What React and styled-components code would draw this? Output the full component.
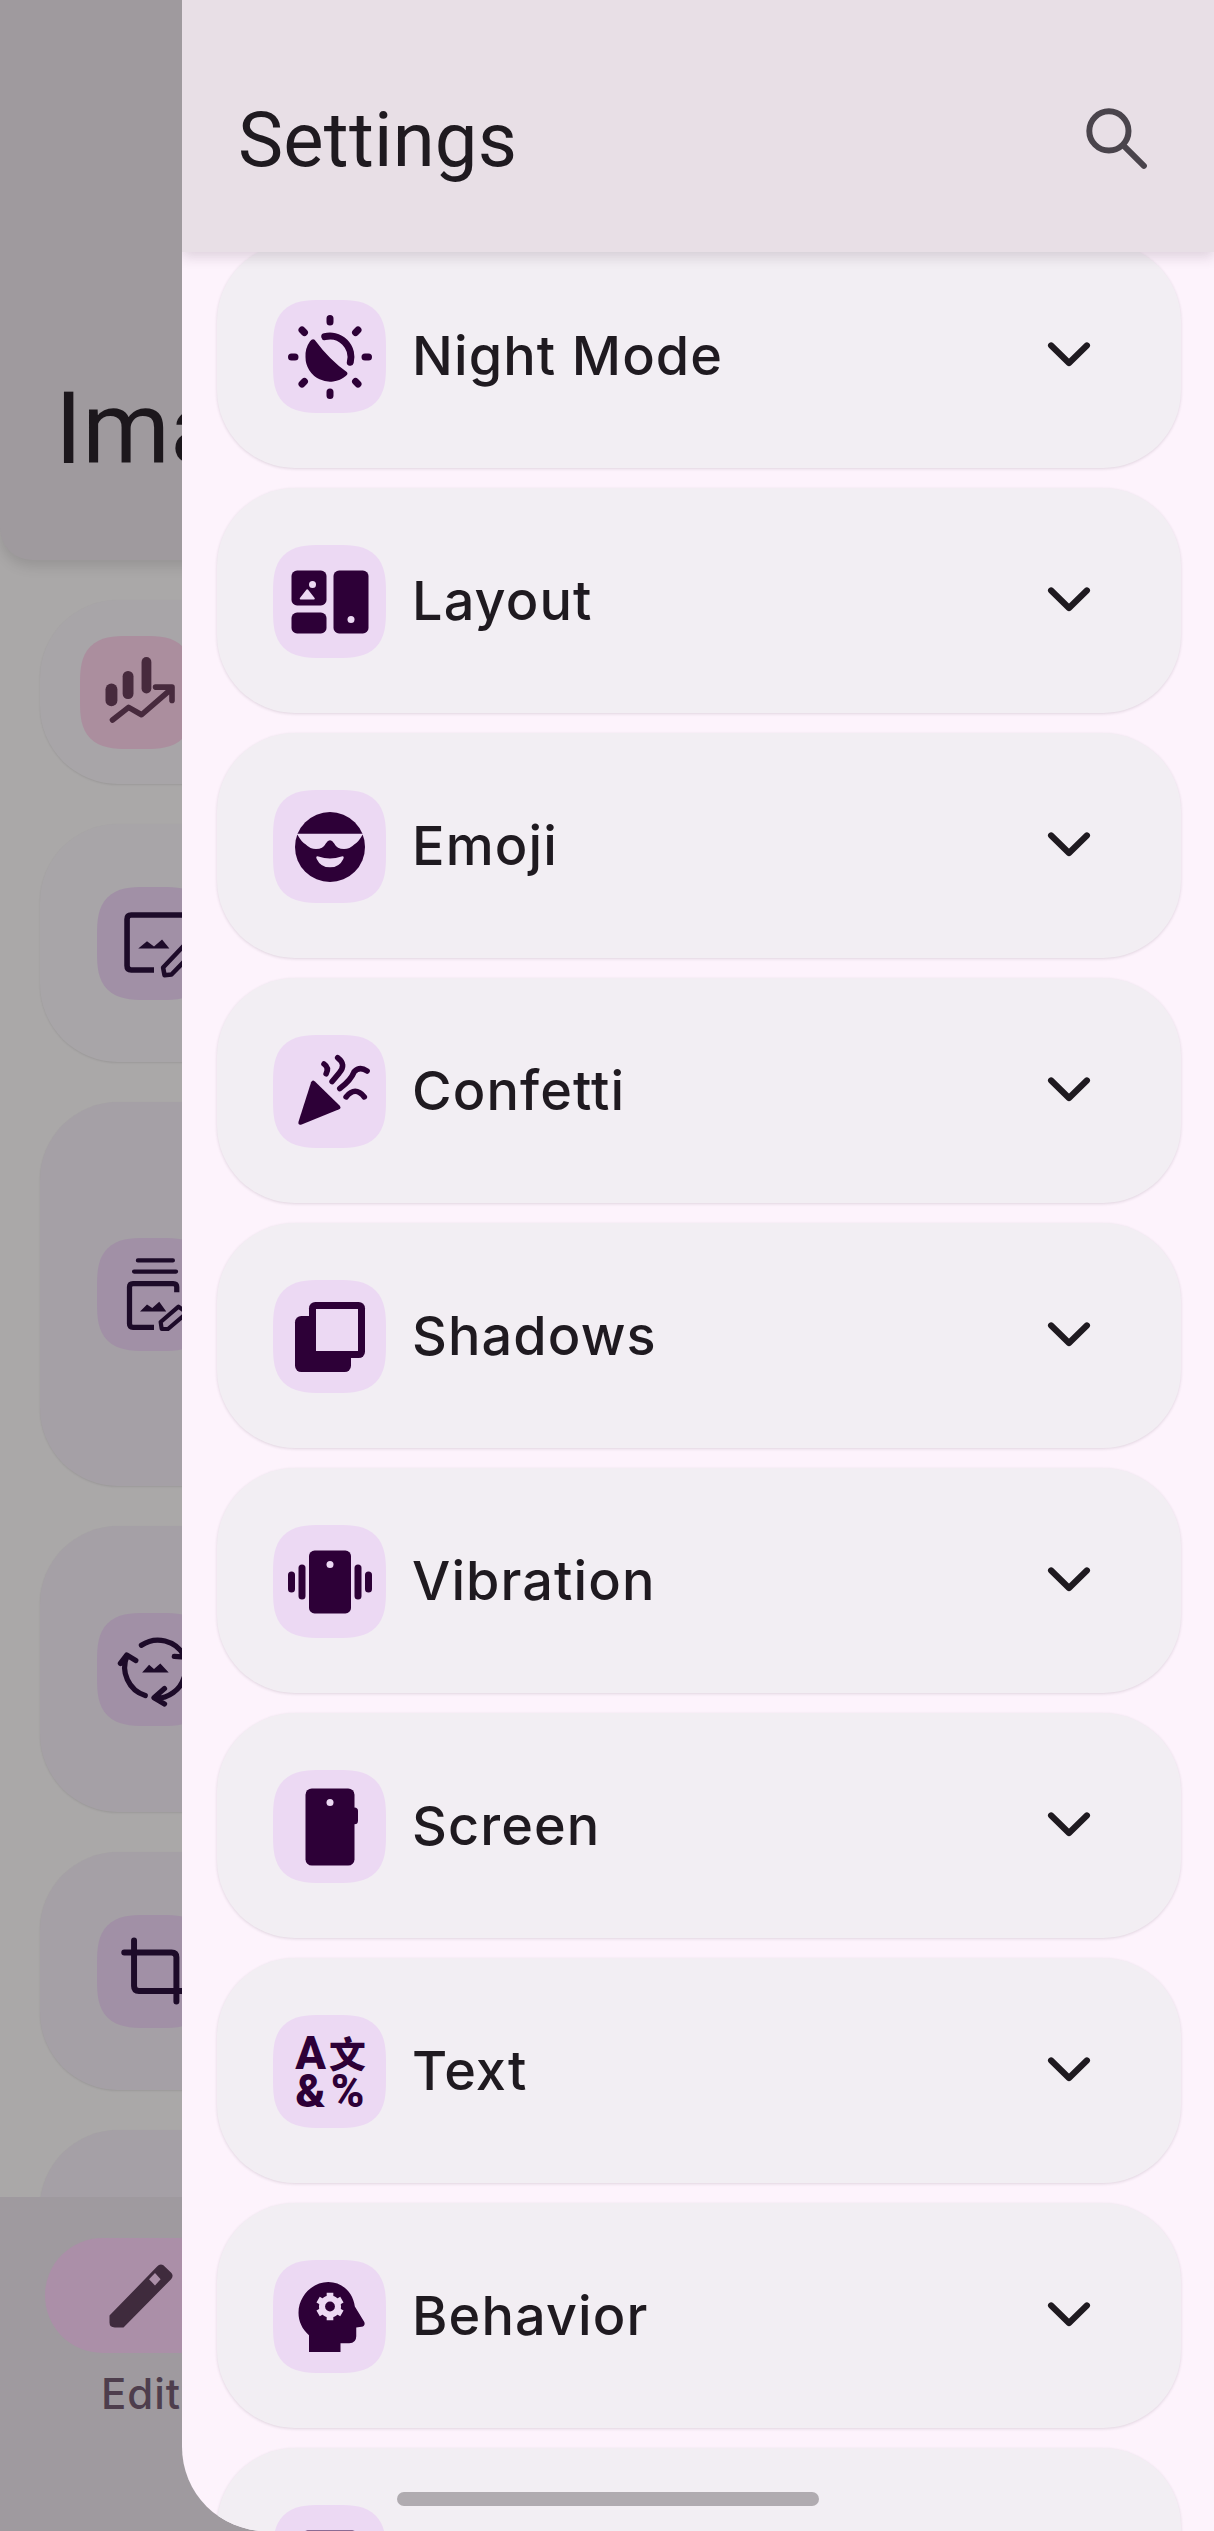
import React from "react";
import styled, { createGlobalStyle } from "styled-components";

const GlobalStyle = createGlobalStyle`
  html, body {
    margin: 0;
    padding: 0;
    background: #aaa8a8;
    font-family: "Roboto", "Liberation Sans", sans-serif;
  }
  * {
    box-sizing: border-box;
  }
`;

const Screen = styled.div`
  position: relative;
  width: 1214px;
  height: 2531px;
  overflow: hidden;
`;

const Page = styled.div`
  height: 100%;
  display: flex;
  flex-direction: column;
  background: #aaa8a8;
`;

const PageHeader = styled.header`
  height: 560px;
  flex: none;
  padding: 371px 0 0 55px;
  background: #9f9a9e;
  border-radius: 0 0 32px 32px;
  box-shadow: 0 6px 14px rgba(0, 0, 0, 0.12);
`;

const PageTitle = styled.h1`
  margin: 0;
  font-size: 100px;
  line-height: 116px;
  font-weight: 380;
  color: #1c171c;
  white-space: nowrap;
`;

const ToolList = styled.div`
  flex: 1;
  min-height: 0;
  overflow: hidden;
  display: flex;
  flex-direction: column;
  gap: 40px;
  padding: 40px 40px 0;
`;

const ToolCard = styled.div`
  flex: none;
  height: ${(props) => props.$height}px;
  display: flex;
  align-items: center;
  padding-left: ${(props) => (props.$accent ? 40 : 57)}px;
  background: ${(props) => (props.$tone === "deep" ? "#a5a0a6" : "#a8a5a8")};
  border-radius: 78px;
  box-shadow: 0 1px 2px rgba(0, 0, 0, 0.09);
`;

const ToolIcon = styled.div`
  width: 113px;
  height: 113px;
  flex: none;
  display: flex;
  align-items: center;
  justify-content: center;
  border-radius: 48px;
  corner-shape: superellipse(1.5);
  background: ${(props) => (props.$accent ? "#ab8e9e" : "#a190a6")};
  color: ${(props) => (props.$accent ? "#472a3d" : "#1d0b29")};
`;

const BottomNav = styled.nav`
  height: 334px;
  flex: none;
  padding: 41px 0 0 45px;
  background: #9f9a9f;
`;

const NavItem = styled.div`
  width: 192px;
  display: flex;
  flex-direction: column;
  align-items: center;
  gap: 16px;
`;

const NavPill = styled.div`
  width: 192px;
  height: 115px;
  display: flex;
  align-items: center;
  justify-content: center;
  border-radius: 58px;
  background: #ab8fa8;
  color: #3f2b3d;
`;

const NavLabel = styled.span`
  font-family: "Inter", "Roboto", sans-serif;
  font-size: 42px;
  line-height: 50px;
  font-weight: 500;
  letter-spacing: 1px;
  color: #4e3e4d;
`;

const Drawer = styled.aside`
  position: absolute;
  top: 0;
  left: 182px;
  bottom: 0;
  width: 1032px;
  overflow: hidden;
  background: #fdf3fc;
  border-radius: 0 0 0 84px;
`;

const DrawerBar = styled.header`
  position: relative;
  z-index: 2;
  height: 252px;
  display: flex;
  align-items: center;
  justify-content: space-between;
  padding: 27px 54px 0 56px;
  background: #e8dfe6;
  box-shadow: 0 5px 12px rgba(60, 40, 60, 0.16);
`;

const DrawerTitle = styled.h2`
  margin: 0;
  font-size: 76px;
  line-height: 88px;
  font-weight: 390;
  letter-spacing: 0.2px;
  color: #1f1a20;
`;

const SearchButton = styled.div`
  display: flex;
  color: #4a444c;
`;

const SettingsList = styled.div`
  display: flex;
  flex-direction: column;
  gap: 20px;
  margin-top: -9px;
  padding: 0 33px 0 35px;
`;

const SettingCard = styled.div`
  height: 225px;
  flex: none;
  display: flex;
  align-items: center;
  padding: 0 70px 0 56px;
  background: #f2eef3;
  border-radius: 78px;
  box-shadow: 0 1px 3px rgba(50, 30, 50, 0.14);
`;

const SettingIcon = styled.div`
  width: 113px;
  height: 113px;
  flex: none;
  margin-top: 2px;
  display: flex;
  align-items: center;
  justify-content: center;
  border-radius: 48px;
  corner-shape: superellipse(1.5);
  background: #ecd9f3;
  color: #2d0037;
`;

const SettingLabel = styled.span`
  flex: 1;
  margin-left: 26px;
  font-family: "Inter", "Roboto", sans-serif;
  font-size: 54px;
  line-height: 64px;
  font-weight: 500;
  letter-spacing: 1.1px;
  color: #1f1a20;
`;

const Chevron = styled.div`
  display: flex;
  color: #1f1a20;
`;

const HomeBar = styled.div`
  position: absolute;
  left: 397px;
  bottom: 25px;
  width: 422px;
  height: 14px;
  border-radius: 7px;
  background: #b0abb0;
  z-index: 3;
`;

const Glyph = ({ children }) => (
  <svg width="84" height="84" viewBox="0 0 24 24" fill="currentColor">
    {children}
  </svg>
);

const BOX = "#ecd9f3";

const NightModeIcon = () => (
  <Glyph>
    <g stroke="currentColor" strokeWidth="2" strokeLinecap="round">
      <path d="M12 1v1M12 22v1M1 12h1M22 12h1M4 4.3l.7.7M19.3 19l.7.7M4 19.7l.7-.7M19.3 5l.7-.7" />
      <path d="M10.5 6.2A6 6 0 0 1 17.8 13.5" fill="none" />
    </g>
    <path d="M7.6 7.1Q12 13 16.8 16.3Q17.3 16.9 16.5 17.4A7 7 0 0 1 5 12A7 7 0 0 1 6.3 7.5Q7 6.6 7.6 7.1Z" />
  </Glyph>
);

const LayoutIcon = () => (
  <Glyph>
    <rect x="1" y="3" width="10" height="10" rx="1.6" />
    <rect x="1" y="15" width="10" height="6" rx="1.6" />
    <rect x="13" y="3" width="10" height="18" rx="1.6" />
    <circle cx="7" cy="7" r="1" fill={BOX} />
    <path d="M5.5 8.6 7.4 11H3.6Z" fill={BOX} stroke={BOX} strokeWidth=".5" strokeLinejoin="round" />
    <circle cx="18" cy="17" r="1" fill={BOX} />
  </Glyph>
);

const EmojiIcon = () => (
  <Glyph>
    <circle cx="12" cy="12" r="10" />
    <path
      d="M0 8.2H24L21.3 8.5Q20 10.8 19 11.2Q17.6 12.6 16 12.6Q14 12.6 13.2 11Q12.6 10.1 12 10.1Q11.4 10.1 10.8 11Q10 12.6 8 12.6Q6.4 12.6 5 11.2Q4 10.8 2.7 8.5Z"
      fill={BOX}
    />
    <path
      d="M8.7 14.7Q12 15.8 15.3 14.7Q16.2 14.5 15.8 15.4A4.2 4.2 0 0 1 8.2 15.4Q7.8 14.5 8.7 14.7Z"
      fill={BOX}
    />
  </Glyph>
);

const ConfettiIcon = () => (
  <Glyph>
    <path d="M7.7 9 14.8 15.9Q15.3 16.6 14.6 16.9L3.9 21.3Q2.8 21.6 3 20.5L6.6 9.2Q7 8.4 7.7 9Z" />
    <g fill="none" stroke="currentColor" strokeWidth="1.6" strokeLinecap="round">
      <path d="M10.3 4Q11.8 5 10.9 6.8" />
      <path d="M14.2 2.2Q16.8 4.2 14.6 6.6L12.6 9" />
      <path d="M22.6 6Q20.5 4.6 18.9 6.2Q18 8.6 14.8 11" />
      <path d="M16.6 13.4Q19.2 10.2 21.8 13.4" />
    </g>
  </Glyph>
);

const ShadowsIcon = () => (
  <Glyph>
    <rect x="2" y="6" width="16" height="16" rx="1.8" />
    <rect x="6" y="2" width="16" height="16" rx="1.8" />
    <rect x="8" y="4" width="12" height="12" fill={BOX} />
  </Glyph>
);

const VibrationIcon = () => (
  <Glyph>
    <rect x="6" y="3" width="12" height="18" rx="1.6" />
    <rect x="3" y="7" width="2" height="10" rx="1" />
    <rect x="0" y="9" width="2" height="6" rx="1" />
    <rect x="19" y="7" width="2" height="10" rx="1" />
    <rect x="22" y="9" width="2" height="6" rx="1" />
    <circle cx="12" cy="7" r="1" fill={BOX} />
  </Glyph>
);

const ScreenIcon = () => (
  <Glyph>
    <rect x="5" y="1" width="14" height="22" rx="1.8" />
    <rect x="18" y="6.4" width="2" height="4.8" rx="1" />
    <circle cx="12" cy="5" r="1" fill={BOX} />
  </Glyph>
);

const TextIcon = () => (
  <svg width="84" height="84" viewBox="0 0 24 24" fill="currentColor" overflow="visible" fontFamily="Roboto, sans-serif" fontWeight="800">
    <text x="6.5" y="11.2" fontSize="13" textAnchor="middle">A</text>
    <text x="17" y="10.9" fontSize="10.5" textAnchor="middle" fontFamily="'Noto Sans CJK SC', sans-serif" fontWeight="900">文</text>
    <text x="6.4" y="22" fontSize="13" textAnchor="middle">&amp;</text>
    <text x="17" y="22" fontSize="13" textAnchor="middle">%</text>
  </svg>
);

const BehaviorIcon = () => (
  <Glyph>
    <path d="M6 22V17.2C4 15.5 3 13.2 3 10.8 3 6 7 2 11.5 2 15.5 2 18.6 5 19.1 9L21.8 13.4Q22.2 14.5 21 14.8L19.5 15V17.5Q19.5 19.4 17.5 19.5H15V22Z" />
    <g stroke={BOX} strokeWidth="1.9" fill={BOX}>
      <circle cx="12" cy="9" r="2.2" />
      <path d="M12 5.1V12.9M8.6 7.05 15.4 10.95M8.6 10.95 15.4 7.05" />
    </g>
    <circle cx="12" cy="9" r="1.4" />
  </Glyph>
);

const FolderIcon = () => (
  <Glyph>
    <rect x="4" y="3" width="16" height="18" rx="1.6" />
  </Glyph>
);

const settings = [
  { label: "Night Mode", icon: NightModeIcon },
  { label: "Layout", icon: LayoutIcon },
  { label: "Emoji", icon: EmojiIcon },
  { label: "Confetti", icon: ConfettiIcon },
  { label: "Shadows", icon: ShadowsIcon },
  { label: "Vibration", icon: VibrationIcon },
  { label: "Screen", icon: ScreenIcon },
  { label: "Text", icon: TextIcon },
  { label: "Behavior", icon: BehaviorIcon },
  { label: "", icon: FolderIcon },
];

const ChartIcon = () => (
  <Glyph>
    <rect x="3" y="9.6" width="3.4" height="6.5" rx="1.7" />
    <rect x="7.9" y="6" width="3.1" height="8" rx="1.5" />
    <rect x="13.3" y="2" width="2.8" height="10.4" rx="1.4" />
    <path d="M5 20 9.6 16.4 13.3 18.5 21.5 11.4M17.3 10.6H22V14.4" fill="none" stroke="currentColor" strokeWidth="1.6" strokeLinecap="round" strokeLinejoin="round" />
  </Glyph>
);

const ImageEditIcon = () => (
  <Glyph>
    <path d="M20 4H5.5Q4.3 4 4.3 5.2V18.5Q4.3 19.7 5.5 19.7H12" fill="none" stroke="currentColor" strokeWidth="1.6" />
    <path d="M7.5 13.6 10 11.5 12 13 14.3 11 16.4 13.6Z" />
    <path d="M15 21.2 14.6 19 20.5 12.8 23 14.8 17 21Z" fill="none" stroke="currentColor" strokeWidth="1.3" strokeLinejoin="round" />
  </Glyph>
);

const StackEditIcon = () => (
  <Glyph>
    <path d="M7.4 2.4H17.4M6.3 5.6H18.3" stroke="currentColor" strokeWidth="1.2" strokeLinecap="round" />
    <path d="M18.5 11.5V10Q18.5 9 17.5 9H6Q5 9 5 10V20.5Q5 21.5 6 21.5H12" fill="none" stroke="currentColor" strokeWidth="1.5" />
    <path d="M8 17 10 15 11.5 16 13.5 14.2 15.5 17Z" />
    <path d="M14.2 22 13.9 20 19 15.6 21.4 17.4 16 22Z" fill="none" stroke="currentColor" strokeWidth="1.2" strokeLinejoin="round" />
  </Glyph>
);

const ConvertIcon = () => (
  <Glyph>
    <g fill="none" stroke="currentColor" strokeWidth="1.5" strokeLinecap="round" strokeLinejoin="round">
      <path d="M8.4 5.2A8.5 8.5 0 0 1 20.6 8.2M21 5.6 20.9 8.6 17.8 8.4" />
      <path d="M9.5 19.6A8.5 8.5 0 0 1 4.3 8.2M2.4 10.4 4.2 8 6.8 9.6" />
      <path d="M20.6 14.4A8.5 8.5 0 0 1 12.4 20.4M15 17.6 12 20.2 15 22" />
    </g>
    <path d="M8.6 13 10.6 10.8 12 12 13.8 10.4 16.2 13Z" />
  </Glyph>
);

const CropIcon = () => (
  <Glyph>
    <path d="M3.5 6.7H17Q18.4 6.7 18.4 8.1V20.7M6.3 3.3V16.3Q6.3 17.7 7.7 17.7H21" fill="none" stroke="currentColor" strokeWidth="1.7" strokeLinecap="round" />
  </Glyph>
);

const EditIcon = () => (
  <Glyph>
    <path d="M3 17.6 16.6 3.6Q17.4 2.6 18.4 3.2L20.7 5.4Q21.4 6.3 20.6 7.2L7 21H4.5Q3 21 3 19.6Z" />
    <path d="M16 5.4 17.6 7.2 16 9 14.3 7.2Z" fill="#ab8fa8" />
  </Glyph>
);

const SearchIcon = () => (
  <svg width="84" height="84" viewBox="0 0 24 24" fill="none" stroke="currentColor" strokeWidth="1.7" strokeLinecap="round">
    <circle cx="9.4" cy="9.4" r="5.6" />
    <path d="M13.6 13.6 19.4 19.4" />
  </svg>
);

const ChevronIcon = () => (
  <svg width="84" height="84" viewBox="0 0 24 24" fill="none" stroke="currentColor" strokeWidth="1.8" strokeLinecap="round" strokeLinejoin="round">
    <path d="M6.9 9 12 14 17.1 9" />
  </svg>
);

const tools = [
  { height: 184, icon: ChartIcon, accent: true },
  { height: 238, icon: ImageEditIcon },
  { height: 384, icon: StackEditIcon, tone: "deep" },
  { height: 286, icon: ConvertIcon, tone: "deep" },
  { height: 238, icon: CropIcon, tone: "deep" },
  { height: 238, icon: null, tone: "deep" },
];

const App = () => {
  return (
    <Screen>
      <GlobalStyle />
      <Page>
        <PageHeader>
          <PageTitle>Image Toolbox</PageTitle>
        </PageHeader>
        <ToolList>
          {tools.map((tool, i) => (
            <ToolCard key={i} $height={tool.height} $accent={tool.accent} $tone={tool.tone}>
              {tool.icon && (
                <ToolIcon $accent={tool.accent}>
                  <tool.icon />
                </ToolIcon>
              )}
            </ToolCard>
          ))}
        </ToolList>
        <BottomNav>
          <NavItem>
            <NavPill>
              <EditIcon />
            </NavPill>
            <NavLabel>Edit</NavLabel>
          </NavItem>
        </BottomNav>
      </Page>
      <Drawer>
        <DrawerBar>
          <DrawerTitle>Settings</DrawerTitle>
          <SearchButton>
            <SearchIcon />
          </SearchButton>
        </DrawerBar>
        <SettingsList>
          {settings.map((item, i) => (
            <SettingCard key={i}>
              <SettingIcon>
                <item.icon />
              </SettingIcon>
              <SettingLabel>{item.label}</SettingLabel>
              <Chevron>
                <ChevronIcon />
              </Chevron>
            </SettingCard>
          ))}
        </SettingsList>
      </Drawer>
      <HomeBar />
    </Screen>
  );
};

export default App;
